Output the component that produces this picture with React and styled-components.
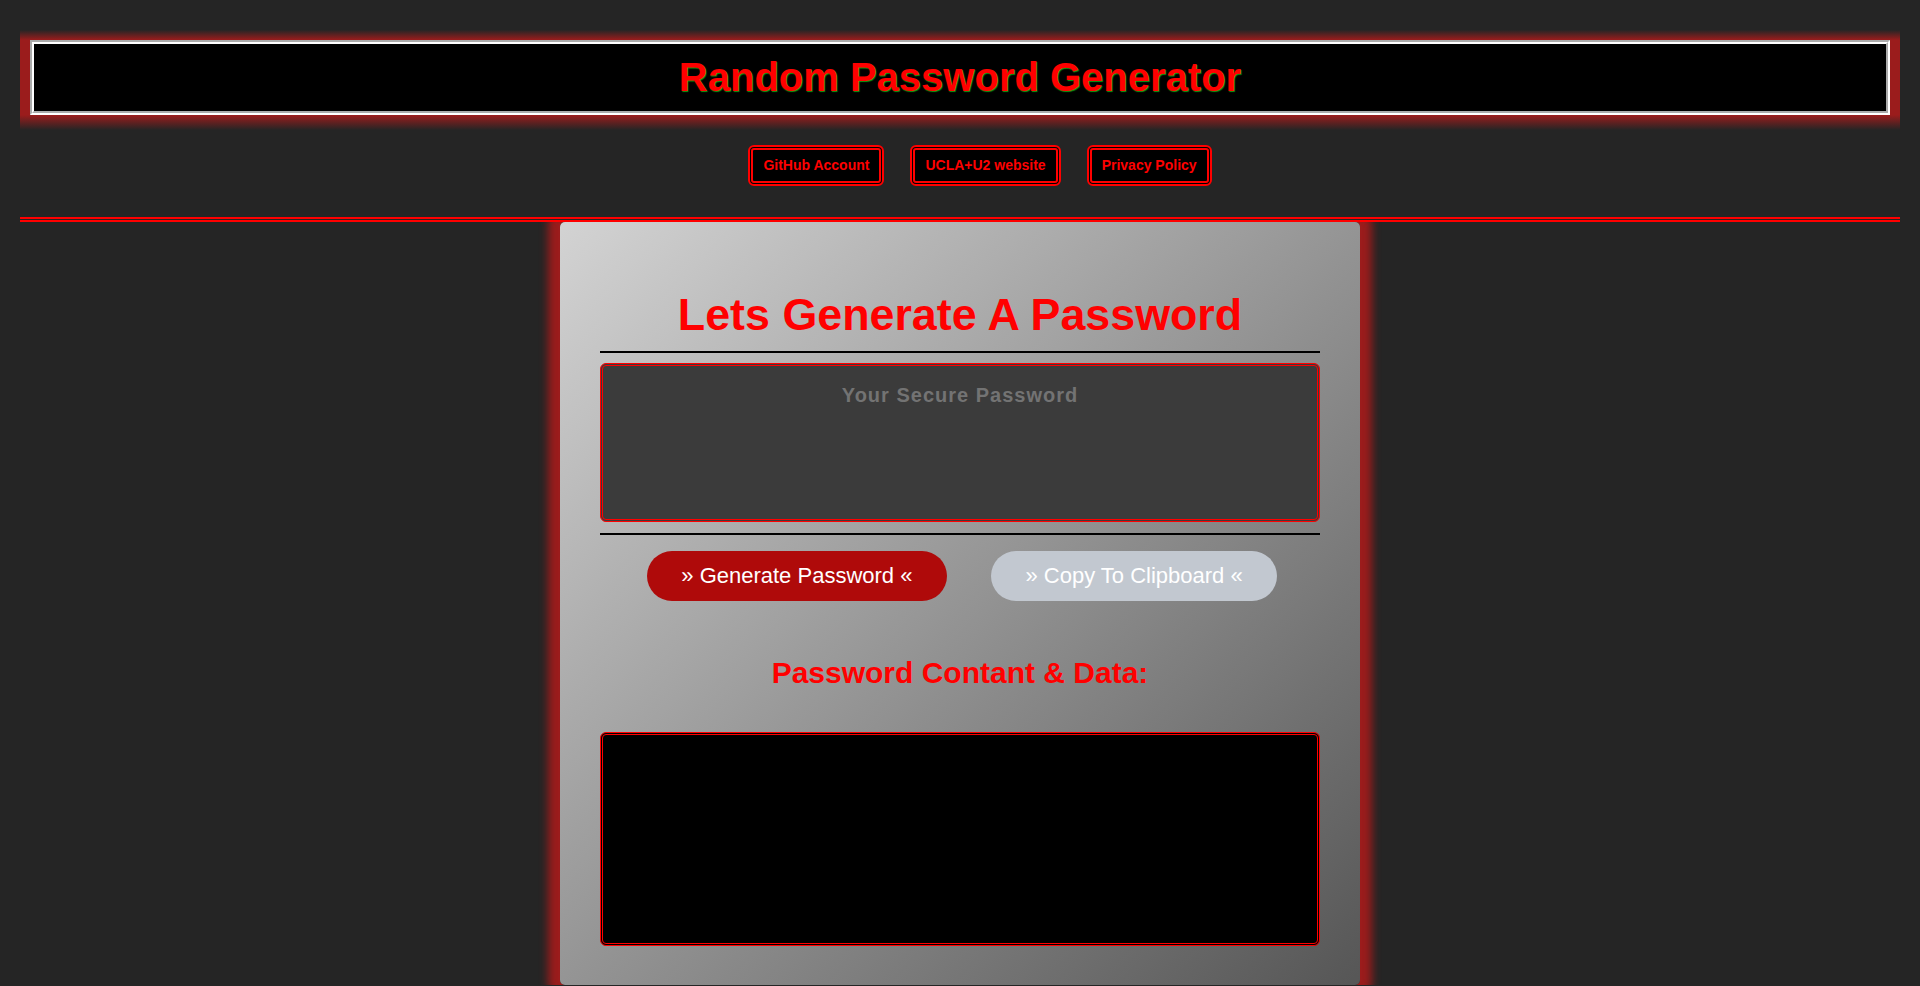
import React from "react";
import styled, { createGlobalStyle } from "styled-components";

const GlobalStyle = createGlobalStyle`
  html, body {
    margin: 0;
    padding: 0;
    background: #252525;
    font-family: "Liberation Sans", Arial, sans-serif;
  }
  * { box-sizing: border-box; }
`;

const Page = styled.div`
  padding-top: 30px;
  display: flex;
  flex-direction: column;
`;

const HeaderGlow = styled.header`
  margin: 0 20px;
  padding: 10px 10px 15px;
  background: linear-gradient(
    to bottom,
    rgba(155, 28, 28, 0) 0px,
    #9b1c1c 10px,
    #9b1c1c 85px,
    rgba(155, 28, 28, 0) 100px
  );
`;

const TitleBox = styled.div`
  border: 4px groove #ffffff;
  background: #000;
  padding: 10px 0 11px;
  text-align: center;
`;

const Title = styled.h1`
  margin: 0;
  font-size: 40px;
  line-height: 46px;
  font-weight: 700;
  color: #ff0000;
  text-shadow: 1px 1px 1px #109a10;
`;

const NavList = styled.ul`
  list-style: none;
  margin: 15px 0 0;
  padding: 0 0 0 40px;
  display: flex;
  justify-content: center;
  gap: 26px;
`;

const NavLink = styled.a`
  display: block;
  padding: 7px 10px;
  border: 5px double #ff0000;
  border-radius: 6px;
  background: #000;
  color: #ff0000;
  font-size: 14px;
  line-height: 17px;
  font-weight: 700;
  text-decoration: none;
`;

const Divider = styled.hr`
  margin: 31px 20px 0;
  border: 0;
  border-top: 5px double #ff0000;
  height: 0;
`;

const Card = styled.main`
  width: 800px;
  margin: 0 auto;
  padding: 0 40px 39px;
  border-radius: 5px;
  background: linear-gradient(to bottom right, #d3d3d3, #565656);
  box-shadow: 0 0 8px 12px #9b1c1c;
  clip-path: inset(0 -40px -40px -40px);
  text-align: center;
  display: flex;
  flex-direction: column;
`;

const Heading = styled.h2`
  margin: 66px 0 0;
  font-size: 44.8px;
  line-height: 52px;
  font-weight: 700;
  color: #ff0000;
`;

const Rule = styled.div`
  margin-top: ${(p) => p.$gap}px;
  height: 2px;
  background: #000;
`;

const PasswordField = styled.textarea`
  display: block;
  margin-top: 10px;
  width: 100%;
  height: 159px;
  padding: 18px;
  border: 3px double #ff0000;
  border-radius: 6px;
  background: #3b3b3b;
  color: #ddd;
  resize: none;
  outline: none;
  text-align: center;
  font-family: "Liberation Sans", Arial, sans-serif;
  font-size: 20px;
  font-weight: 700;
  letter-spacing: 1px;

  &::placeholder {
    color: #737373;
    opacity: 1;
  }
`;

const ButtonRow = styled.div`
  margin-top: 16px;
  display: flex;
  justify-content: center;
  gap: 44px;
  padding-left: 4px;
`;

const PillButton = styled.button`
  height: 50px;
  padding: 0 34.5px;
  border: 0;
  border-radius: 25px;
  background: ${(p) => (p.$variant === "primary" ? "#af0a0a" : "#c2c8d0")};
  color: #ffffff;
  font-family: "Liberation Sans", Arial, sans-serif;
  font-size: 22px;
  cursor: pointer;
`;

const SubHeading = styled.h3`
  margin: 55px 0 0;
  font-size: 30px;
  line-height: 34px;
  font-weight: 700;
  color: #ff0000;
`;

const DataBox = styled.div`
  margin-top: 42px;
  height: 214px;
  border: 3px double #ff0000;
  border-radius: 6px;
  background: #000;
`;

export default function App() {
  return (
    <>
      <GlobalStyle />
      <Page>
        <HeaderGlow>
          <TitleBox>
            <Title>Random Password Generator</Title>
          </TitleBox>
        </HeaderGlow>
        <nav>
          <NavList>
            <li><NavLink href="#">GitHub Account</NavLink></li>
            <li><NavLink href="#">UCLA+U2 website</NavLink></li>
            <li><NavLink href="#">Privacy Policy</NavLink></li>
          </NavList>
        </nav>
        <Divider />
        <Card>
          <Heading>Lets Generate A Password</Heading>
          <Rule $gap={11} />
          <PasswordField readOnly placeholder="Your Secure Password" />
          <Rule $gap={11} />
          <ButtonRow>
            <PillButton $variant="primary">» Generate Password «</PillButton>
            <PillButton $variant="secondary">» Copy To Clipboard «</PillButton>
          </ButtonRow>
          <SubHeading>Password Contant &amp; Data:</SubHeading>
          <DataBox />
        </Card>
      </Page>
    </>
  );
}
